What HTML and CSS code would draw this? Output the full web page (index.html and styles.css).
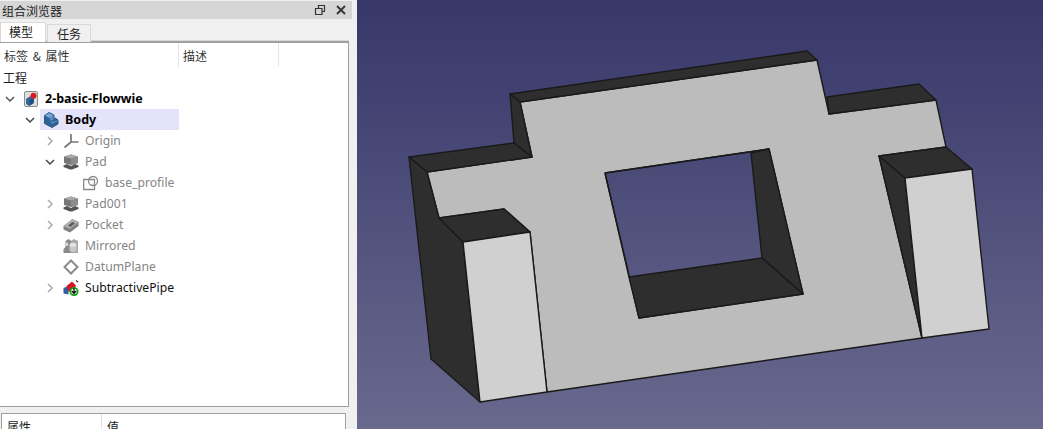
FILE: index.html
```html
<!DOCTYPE html>
<html lang="zh">
<head>
<meta charset="utf-8">
<title>组合浏览器</title>
<link rel="stylesheet" href="styles.css">
</head>
<body>
<div class="app">
  <aside class="side">
    <header class="dock-title">
      <span class="dock-name">组合浏览器</span>
      <svg class="dock-btn" width="12" height="12" viewBox="0 0 12 12"><path d="M1.500 4.500h6.500v6h-6.500zM4.500 4.500v-3h6v6h-2.500" fill="none" stroke="#333" stroke-width="1.200"/></svg>
      <svg class="dock-btn" width="12" height="12" viewBox="0 0 12 12"><path d="M2 2l8 8M10 2l-8 8" fill="none" stroke="#333" stroke-width="1.800"/></svg>
    </header>
    <nav class="tabs">
      <span class="tab tab-active">模型</span>
      <span class="tab">任务</span>
    </nav>
    <section class="tree-frame">
      <div class="columns">
        <span class="col col-label">标签 &amp; 属性</span>
        <span class="col col-desc">描述</span>
      </div>
      <div class="group-label">工程</div>
      <ul class="tree">
        <li class="row d0 strong">
          <svg class="chev" width="12" height="12" viewBox="0 0 12 12"><path d="M2 4l4 4 4-4" fill="none" stroke="#555" stroke-width="1.500"/></svg>
          <span class="item">
            <svg class="icon" width="16" height="16" viewBox="0 0 16 16"><rect x="1.500" y="0.500" width="13" height="15" rx="1.500" fill="#dedede" stroke="#8c8c8c"/><path d="M3.500 8l4-2.500 3 1.500v5l-4 2.500-3-1.500z" fill="#2f6aa6" stroke="#1c3f66" stroke-width=".6"/><path d="M6.500 9l4-2v5l-4 2.500z" fill="#1f4f80"/><circle cx="10.500" cy="4.800" r="3" fill="#d81e1e"/></svg>
            <span class="label">2-basic-Flowwie</span>
          </span>
        </li>
        <li class="row d1 strong selected">
          <svg class="chev" width="12" height="12" viewBox="0 0 12 12"><path d="M2 4l4 4 4-4" fill="none" stroke="#444" stroke-width="1.500"/></svg>
          <span class="item">
            <svg class="icon" width="16" height="16" viewBox="0 0 16 16"><path d="M1.500 3.500L6 .500l5 2.500v3.500l1-.500 3 2v4L9 15.500l-7.500-4z" fill="#2f6296" stroke="#2a5683"/><path d="M2 3.500L6 1l4.500 2.300L6.500 6z" fill="#7ba8d4"/><path d="M6.500 6l4-2.700v4.200L8 9l1.500 1 5.500-2v.5L9 12z" fill="#5b8fc2"/></svg>
            <span class="label">Body</span>
          </span>
        </li>
        <li class="row d2 muted">
          <svg class="chev" width="12" height="12" viewBox="0 0 12 12"><path d="M4 2l4 4-4 4" fill="none" stroke="#aaa" stroke-width="1.500"/></svg>
          <span class="item">
            <svg class="icon" width="16" height="16" viewBox="0 0 16 16"><path d="M8 1v8h7.500M8 9l-6.500 5.500" fill="none" stroke="#777" stroke-width="1.700"/></svg>
            <span class="label">Origin</span>
          </span>
        </li>
        <li class="row d2 muted">
          <svg class="chev" width="12" height="12" viewBox="0 0 12 12"><path d="M2 4l4 4 4-4" fill="none" stroke="#444" stroke-width="1.500"/></svg>
          <span class="item">
            <svg class="icon" width="16" height="16" viewBox="0 0 16 16"><path d="M1 2.500l7-2 7 2V9l-7 2-7-2z" fill="#777"/><path d="M1 2.500l7 2 7-2-7-2z" fill="#aaa"/><path d="M8 4.500V11l7-2V2.500z" fill="#8c8c8c"/><path d="M.500 11.500L4 10l4 2 4-2 3.500 1.500V13l-6.500 2.500H7L.500 13z" fill="#555"/></svg>
            <span class="label">Pad</span>
          </span>
        </li>
        <li class="row d3 muted">
          <span class="chev chev-none"></span>
          <span class="item">
            <svg class="icon" width="16" height="16" viewBox="0 0 16 16"><path d="M0.700 4.500h10.800v10H0.700z" fill="#fff" stroke="#888" stroke-width="1.300"/><circle cx="10" cy="6" r="4.500" fill="none" stroke="#888" stroke-width="1.300"/></svg>
            <span class="label">base_profile</span>
          </span>
        </li>
        <li class="row d2 muted">
          <svg class="chev" width="12" height="12" viewBox="0 0 12 12"><path d="M4 2l4 4-4 4" fill="none" stroke="#aaa" stroke-width="1.500"/></svg>
          <span class="item">
            <svg class="icon" width="16" height="16" viewBox="0 0 16 16"><path d="M1 2.500l7-2 7 2V9l-7 2-7-2z" fill="#777"/><path d="M1 2.500l7 2 7-2-7-2z" fill="#aaa"/><path d="M8 4.500V11l7-2V2.500z" fill="#8c8c8c"/><path d="M.500 11.500L4 10l4 2 4-2 3.500 1.500V13l-6.500 2.500H7L.500 13z" fill="#555"/></svg>
            <span class="label">Pad001</span>
          </span>
        </li>
        <li class="row d2 muted">
          <svg class="chev" width="12" height="12" viewBox="0 0 12 12"><path d="M4 2l4 4-4 4" fill="none" stroke="#aaa" stroke-width="1.500"/></svg>
          <span class="item">
            <svg class="icon" width="16" height="16" viewBox="0 0 16 16"><path d="M0.500 9L9.500 2l6 3v4l-8.500 6.500-6.500-3z" fill="#808080"/><path d="M0.500 9l9-7 6 3-8.500 7z" fill="#b0b0b0"/><path d="M5 8.500l4.500-3.500 2.500 1.300-4.500 3.700z" fill="#5c5c5c"/></svg>
            <span class="label">Pocket</span>
          </span>
        </li>
        <li class="row d2 muted">
          <span class="chev chev-none"></span>
          <span class="item">
            <svg class="icon" width="16" height="16" viewBox="0 0 16 16"><path d="M0.500 15v-4l2-2V3l3-2 3 2v12z" fill="#8a8a8a"/><path d="M8 3l3-2 4 2v12H8z" fill="#a8a8a8"/><ellipse cx="10" cy="7" rx="3.500" ry="2.300" fill="#e4e4e4"/><path d="M6.500 7v5c0 2.500 7 2.500 7 0V7c0 2.500-7 2.500-7 0z" fill="#c8c8c8"/><path d="M3 4.500h2v3.500H3z" fill="#d8d8d8"/></svg>
            <span class="label">Mirrored</span>
          </span>
        </li>
        <li class="row d2 muted">
          <span class="chev chev-none"></span>
          <span class="item">
            <svg class="icon" width="16" height="16" viewBox="0 0 16 16"><path d="M8 1.500L14.500 8 8 14.500 1.500 8z" fill="#fff" stroke="#8a8a8a" stroke-width="2"/></svg>
            <span class="label">DatumPlane</span>
          </span>
        </li>
        <li class="row d2">
          <svg class="chev" width="12" height="12" viewBox="0 0 12 12"><path d="M4 2l4 4-4 4" fill="none" stroke="#aaa" stroke-width="1.500"/></svg>
          <span class="item">
            <svg class="icon" width="16" height="16" viewBox="0 0 16 16"><path d="M0.500 8l5-2v8.500l-5-1z" fill="#2f5f9c"/><path d="M3.500 6L9 1.500l4 4-3 6H5.500z" fill="#d8161e"/><path d="M13 .500l2 1.500" stroke="#333" stroke-width="1.200"/><circle cx="11" cy="11.500" r="3.700" fill="#fff" stroke="#17a317" stroke-width="1.800"/><path d="M11 8v5.500M8.800 11l2.200 2.500 2.200-2.500" fill="none" stroke="#111" stroke-width="1.300"/></svg>
            <span class="label">SubtractivePipe</span>
          </span>
        </li>
      </ul>
    </section>
    <section class="prop-frame">
      <div class="prop-head">
        <span class="prop-col">属性</span>
        <span class="prop-col prop-value">值</span>
      </div>
    </section>
  </aside>
  <main class="view">
    <svg class="scene" width="686" height="429" viewBox="357 0 686 429">
      <g class="edges">
        <path class="face" fill-rule="evenodd" d="M427 172L532 157 520 102 817 60 829 114 936 100 946 147 879 156 922 338 547 392 530 232 504 209 439 218ZM605 173L769 149 803 294 639 318Z"/>
        <polygon class="dark" points="510,94 807,51 817,60 520,102"/>
        <polygon class="dark" points="510,94 520,102 532,157 514,143"/>
        <polygon class="dark" points="409,157 514,143 532,157 427,172"/>
        <polygon class="dark" points="827,97 919,84 936,100 829,114"/>
        <polygon class="dark" points="409,157 427,172 439,218 463,242 480,402 431,359"/>
        <polygon class="dark" points="439,218 504,209 530,232 463,242"/>
        <polygon class="light" points="463,242 530,232 547,392 480,402"/>
        <polygon class="dark" points="751,153 769,149 803,294 762,258"/>
        <polygon class="dark" points="629,277 762,258 803,294 639,318"/>
        <polygon class="dark" points="879,156 905,178 922,338"/>
        <polygon class="dark" points="879,156 946,147 972,169 905,178"/>
        <polygon class="light" points="905,178 972,169 989,329 922,338"/>
        <path class="rim" d="M605 173L769 149M605 173L629 277"/>
      </g>
    </svg>
  </main>
</div>
</body>
</html>
```

FILE: styles.css
```css
* { box-sizing: border-box; }
html, body { margin: 0; padding: 0; height: 100%; overflow: hidden; }
body {
  font-family: "Noto Sans", "Noto Sans CJK SC", sans-serif;
  font-size: 12px;
  color: #111;
  background: #f0f0f0;
}
.app { display: flex; width: 1043px; height: 429px; }
.side {
  width: 357px;
  flex: none;
  display: flex;
  flex-direction: column;
  background: #f0f0f0;
  overflow: hidden;
  padding-top: 1px;
}
.dock-title {
  height: 18px;
  margin-right: 5px;
  background: #d6d6d6;
  display: flex;
  align-items: center;
  gap: 9px;
  padding: 0 5px 0 2px;
  flex: none;
}
.dock-name {
  flex: 1;
  font-family: "Noto Sans CJK SC", sans-serif;
  line-height: 18px;
  padding-top: 1px;
  color: #222;
}
.dock-btn { flex: none; }
.tabs {
  display: flex;
  align-items: flex-end;
  height: 23px;
  flex: none;
  position: relative;
  z-index: 1;
  margin-bottom: -1px;
}
.tab {
  font-family: "Noto Sans CJK SC", sans-serif;
  height: 18px;
  width: 44px;
  text-align: center;
  line-height: 17px;
  background: #f0f0f0;
  border: 1px solid #d9d9d9;
  border-bottom: none;
  margin-left: 1px;
  color: #222;
}
.tab-active {
  height: 20px;
  width: 46px;
  margin-left: 0;
  padding-right: 4px;
  background: #fff;
  border-color: #d9d9d9;
}
.tree-frame {
  height: 366px;
  width: 349px;
  flex: none;
  background: #fff;
  border: 1px solid #a0a0a0;
  border-left: none;
  border-top-width: 2px;
  box-shadow: 0 -1px 0 #d9d9d9;
}
.columns { display: flex; height: 24px; }
.col {
  font-family: "Noto Sans CJK SC", sans-serif;
  line-height: 26px;
  border-right: 1px solid #e5e5e5;
  color: #333;
  padding-left: 4px;
  word-spacing: 2px;
}
.col-label { width: 179px; }
.col-desc { width: 100px; }
.group-label {
  font-family: "Noto Sans CJK SC", sans-serif;
  height: 21px;
  line-height: 21px;
  padding-left: 3px;
  color: #222;
}
.tree { list-style: none; margin: 0; padding: 0; width: 179px; }
.row {
  display: flex;
  align-items: center;
  height: 21px;
  font-size: 12.200px;
  white-space: nowrap;
}
.d0 { padding-left: 4px; }
.d1 { padding-left: 24px; }
.d2 { padding-left: 44px; }
.d3 { padding-left: 64px; }
.chev { flex: none; width: 12px; height: 12px; margin-right: 4px; }
.chev-none { display: block; }
.item {
  flex: 1;
  min-width: 0;
  height: 21px;
  display: flex;
  align-items: center;
  gap: 6px;
  padding-left: 3px;
}
.icon { flex: none; }
.strong { font-weight: 700; font-size: 12.500px; color: #000; }
.muted { color: #858585; }
.selected .item { background: #e3e3fa; }
.prop-frame {
  height: 16px;
  width: 345px;
  flex: none;
  margin: 6px 0 0 1px;
  background: #fff;
  border: 1px solid #a0a0a0;
  border-bottom: none;
  overflow: hidden;
}
.prop-head { display: flex; height: 24px; }
.prop-col {
  font-family: "Noto Sans CJK SC", sans-serif;
  width: 100px;
  border-right: 1px solid #e0e0e0;
  padding-left: 5px;
  line-height: 25px;
  color: #222;
}
.prop-value { flex: 1; border-right: none; }
.view {
  flex: 1;
  background: linear-gradient(#37376a, #69698e);
}
.scene { display: block; }
.edges { stroke: #1a1a1a; stroke-width: 1.400; stroke-linejoin: round; }
.face { fill: #bcbcbc; }
.dark { fill: #2e2e2e; }
.light { fill: #d0d0d0; }
.rim { fill: none; }
```
